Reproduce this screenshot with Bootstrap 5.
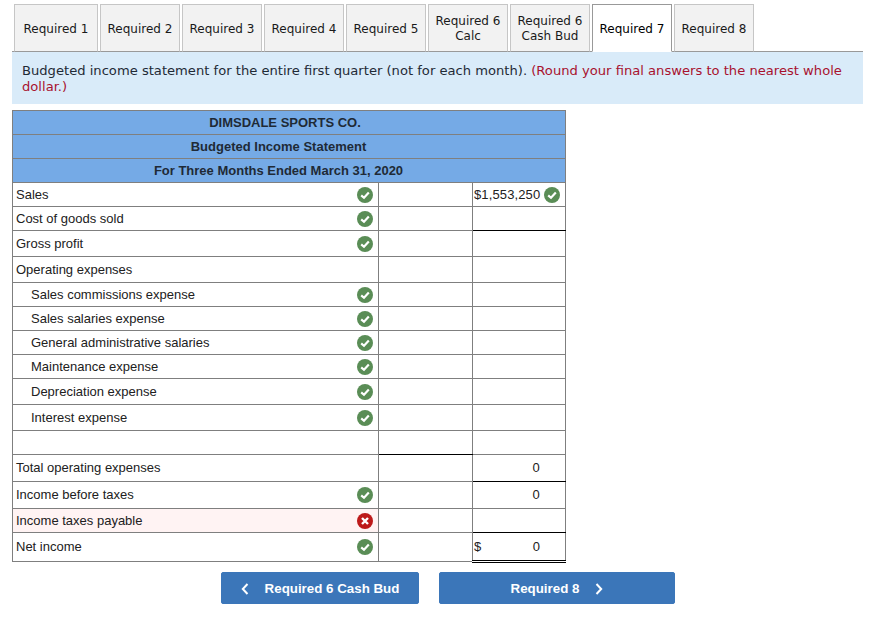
<!DOCTYPE html>
<html lang="en">
<head>
<meta charset="utf-8">
<title>Budgeted income statement</title>
<link href="https://cdn.jsdelivr.net/npm/bootstrap@5.3.0/dist/css/bootstrap.min.css" rel="stylesheet">
<style>
body { background:#fff; color:#212121; font-family:"Liberation Sans",Arial,sans-serif; font-size:13px; }
.page-wrap { padding:4px 9px 0 12px; }
.req-tabs { border-bottom:1px solid #999; padding-left:2px; gap:2px; flex-wrap:nowrap; height:48px; font-family:"DejaVu Sans",sans-serif; }
.req-tabs .nav-link { display:flex; align-items:center; justify-content:center; text-align:center; height:48px; width:80px; margin:0; padding:2px 0 0; background:#f2f2f2; border:1px solid #c6c6c6; border-bottom-color:#999; border-radius:0; color:#1a1a1a; font-size:12px; line-height:15px; }
.req-tabs .nav-item:first-child .nav-link { width:84px; }
.req-tabs .nav-link.active { background:#fff; border-color:#999 #999 #fff; color:#000; }
.prompt-box { background:#d9ebf9; height:52px; padding:11px 10px 0; font-family:"DejaVu Sans",sans-serif; font-size:13.11px; line-height:16px; color:#1f2a36; margin-bottom:6px; }
.prompt-red { color:#a8122f; }
.stmt { width:553px; table-layout:fixed; border-collapse:collapse; margin:0; --bs-table-bg:transparent; }
.stmt td { border:1px solid #7f7f7f; padding:0 3px; vertical-align:middle; line-height:16px; color:#212121; font-size:13px; }
.stmt .head td { background:#75aae6; height:24px; text-align:center; font-weight:700; color:#1f2a36; padding-right:24px; }
.stmt .head:first-child td { padding-right:11px; }
.label-cell { background:#f6f9f6; }
.label-cell.plain { background:#fff; }
.label-cell.bad { background:#fff3f3; }
.label-inner { display:flex; align-items:center; justify-content:space-between; padding-right:2px; }
.indent { padding-left:15px; }
.mark-ok, .mark-bad { display:block; flex:none; width:16px; height:16px; }
.amt { display:flex; align-items:center; justify-content:space-between; margin-left:-2px; padding-right:2px; }
.amt-money { letter-spacing:.12px; }
.amt-net .zero-val { padding-right:20px; }
.amt-zero { text-align:center; padding-left:34px !important; padding-right:0 !important; }
.stmt td.line-under { border-bottom:1px solid #000; }
.stmt td.line-double { border-bottom:3px double #000; }
.nav-btns { margin:9px 0 0 209px; gap:20px; }
.nav-btns .btn { height:32px; padding:1px 0 0; background:#3b76b9; border-color:#3b76b9; border-radius:2px; color:#fff; font-weight:700; font-size:13.33px; display:flex; align-items:center; justify-content:center; gap:16px; }
.btn-back { width:198px; }
.btn-next { width:236px; }
</style>
</head>
<body>
<svg width="0" height="0" class="position-absolute">
<defs>
<symbol id="ok" viewBox="0 0 16 16"><circle cx="8" cy="8" r="8" fill="#5a8d56"/><path d="M4.2 8.4 7 10.8 11.8 5.6" fill="none" stroke="#fff" stroke-width="2.2"/></symbol>
<symbol id="bad" viewBox="0 0 16 16"><circle cx="8" cy="8" r="8" fill="#bd1a1a"/><path d="M5 5 11 11M11 5 5 11" fill="none" stroke="#fff" stroke-width="2.4"/></symbol>
</defs>
</svg>
<div class="page-wrap">
<ul class="nav nav-tabs req-tabs">
<li class="nav-item"><a class="nav-link" href="#">Required 1</a></li>
<li class="nav-item"><a class="nav-link" href="#">Required 2</a></li>
<li class="nav-item"><a class="nav-link" href="#">Required 3</a></li>
<li class="nav-item"><a class="nav-link" href="#">Required 4</a></li>
<li class="nav-item"><a class="nav-link" href="#">Required 5</a></li>
<li class="nav-item"><a class="nav-link" href="#">Required 6<br>Calc</a></li>
<li class="nav-item"><a class="nav-link" href="#">Required 6<br>Cash Bud</a></li>
<li class="nav-item"><a class="nav-link active" href="#">Required 7</a></li>
<li class="nav-item"><a class="nav-link" href="#">Required 8</a></li>
</ul>
<div class="prompt-box">Budgeted income statement for the entire first quarter (not for each month). <span class="prompt-red">(Round your final answers to the nearest whole</span> <span class="prompt-red">dollar.)</span></div>
<table class="table stmt">
<colgroup><col style="width:366px"><col style="width:94px"><col style="width:93px"></colgroup>
<tbody>
<tr class="head"><td colspan="3">DIMSDALE SPORTS CO.</td></tr>
<tr class="head"><td colspan="3">Budgeted Income Statement</td></tr>
<tr class="head"><td colspan="3">For Three Months Ended March 31, 2020</td></tr>
<tr style="height:24px"><td class="label-cell"><div class="label-inner"><span>Sales</span><svg class="mark-ok"><use href="#ok"/></svg></div></td><td></td><td><div class="amt"><span class="amt-money">$1,553,250</span><svg class="mark-ok"><use href="#ok"/></svg></div></td></tr>
<tr style="height:24px"><td class="label-cell"><div class="label-inner"><span>Cost of goods sold</span><svg class="mark-ok"><use href="#ok"/></svg></div></td><td></td><td class="line-under"></td></tr>
<tr style="height:26px"><td class="label-cell"><div class="label-inner"><span>Gross profit</span><svg class="mark-ok"><use href="#ok"/></svg></div></td><td></td><td></td></tr>
<tr style="height:26px"><td class="label-cell plain"><div class="label-inner"><span>Operating expenses</span></div></td><td></td><td></td></tr>
<tr style="height:24px"><td class="label-cell"><div class="label-inner indent"><span>Sales commissions expense</span><svg class="mark-ok"><use href="#ok"/></svg></div></td><td></td><td></td></tr>
<tr style="height:24px"><td class="label-cell"><div class="label-inner indent"><span>Sales salaries expense</span><svg class="mark-ok"><use href="#ok"/></svg></div></td><td></td><td></td></tr>
<tr style="height:24px"><td class="label-cell"><div class="label-inner indent"><span>General administrative salaries</span><svg class="mark-ok"><use href="#ok"/></svg></div></td><td></td><td></td></tr>
<tr style="height:24px"><td class="label-cell"><div class="label-inner indent"><span>Maintenance expense</span><svg class="mark-ok"><use href="#ok"/></svg></div></td><td></td><td></td></tr>
<tr style="height:26px"><td class="label-cell"><div class="label-inner indent"><span>Depreciation expense</span><svg class="mark-ok"><use href="#ok"/></svg></div></td><td></td><td></td></tr>
<tr style="height:26px"><td class="label-cell"><div class="label-inner indent"><span>Interest expense</span><svg class="mark-ok"><use href="#ok"/></svg></div></td><td></td><td></td></tr>
<tr style="height:24px"><td class="label-cell plain"></td><td class="line-under"></td><td></td></tr>
<tr style="height:27px"><td class="label-cell plain"><div class="label-inner"><span>Total operating expenses</span></div></td><td></td><td class="amt-zero line-under">0</td></tr>
<tr style="height:27px"><td class="label-cell"><div class="label-inner"><span>Income before taxes</span><svg class="mark-ok"><use href="#ok"/></svg></div></td><td></td><td class="amt-zero">0</td></tr>
<tr style="height:24px"><td class="label-cell bad"><div class="label-inner"><span>Income taxes payable</span><svg class="mark-bad"><use href="#bad"/></svg></div></td><td></td><td class="line-under"></td></tr>
<tr style="height:29px"><td class="label-cell"><div class="label-inner"><span>Net income</span><svg class="mark-ok"><use href="#ok"/></svg></div></td><td></td><td class="line-double"><div class="amt amt-net"><span>$</span><span class="zero-val">0</span></div></td></tr>
</tbody>
</table>
<div class="d-flex nav-btns">
<button type="button" class="btn btn-primary btn-back"><svg width="8" height="12" viewBox="0 0 8 12"><path d="M6.5 1 1.8 6l4.7 5" fill="none" stroke="#fff" stroke-width="2"/></svg><span>Required 6 Cash Bud</span></button>
<button type="button" class="btn btn-primary btn-next"><span>Required 8</span><svg width="8" height="12" viewBox="0 0 8 12"><path d="M1.5 1 6.2 6l-4.7 5" fill="none" stroke="#fff" stroke-width="2"/></svg></button>
</div>
</div>
<script src="https://cdn.jsdelivr.net/npm/bootstrap@5.3.0/dist/js/bootstrap.bundle.min.js"></script>
</body>
</html>
